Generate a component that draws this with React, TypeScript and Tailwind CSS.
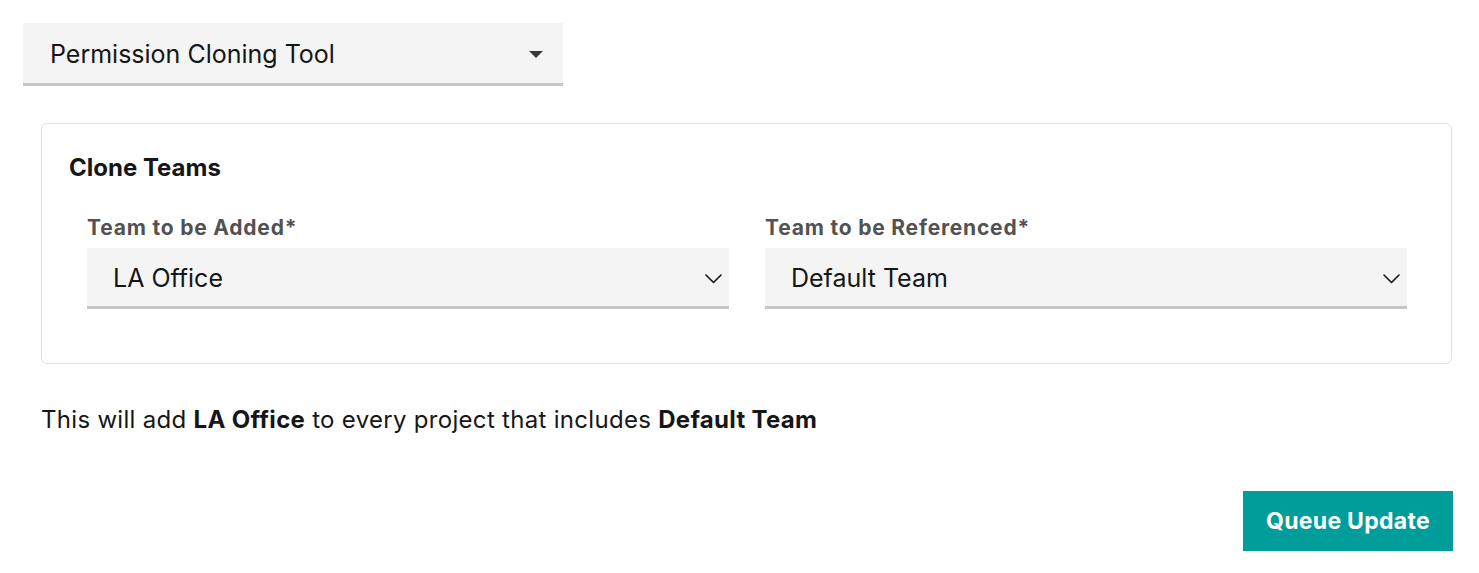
import React from 'react'

const font = { fontFamily: 'Inter, "Liberation Sans", Arial, sans-serif' }

function Chevron() {
  return (
    <svg width="17" height="10" viewBox="0 0 17 10" fill="none" aria-hidden="true">
      <polyline points="1,1 8.5,8.5 16,1" stroke="#161616" strokeWidth="1.6" strokeLinecap="round" strokeLinejoin="round" />
    </svg>
  )
}

function Caret() {
  return (
    <svg width="14" height="7" viewBox="0 0 14 7" aria-hidden="true">
      <polygon points="0,0 14,0 7,7" fill="#393939" />
    </svg>
  )
}

function TeamSelect({ label, value }: { label: string; value: string }) {
  return (
    <div className="flex flex-col">
      <label className="text-[21px] leading-[26px] font-bold tracking-[0.8px] text-[#525252]">{label}</label>
      <div className="mt-[7px] h-[61px] flex items-center justify-between bg-[#f4f4f4] border-b-[3px] border-[#c6c6c6] pl-[26px] pr-[7px] pt-[3px]">
        <span className="text-[25px] leading-[29px] text-[#161616]">{value}</span>
        <Chevron />
      </div>
    </div>
  )
}

export default function App() {
  const added = 'LA Office'
  const referenced = 'Default Team'

  return (
    <div className="min-h-screen bg-white p-[23px] text-[#161616]" style={font}>
      <div className="w-[540px] h-[63px] flex items-center justify-between bg-[#f4f4f4] border-b-[3px] border-[#c6c6c6] pl-[27px] pr-[20px] pt-[3px]">
        <span className="text-[25px] leading-[29px]">Permission Cloning Tool</span>
        <Caret />
      </div>

      <div className="ml-[18px] mt-[37px] w-[1411px] rounded-[6px] border border-[#e0e0e0] pt-[30px] pb-[54px] pl-[27px] pr-[27px]">
        <h2 className="text-[24px] leading-[28px] font-bold">Clone Teams</h2>
        <div className="mt-[33px] pl-[18px] pr-[17px] grid grid-cols-2 gap-[36px]">
          <TeamSelect label="Team to be Added*" value={added} />
          <TeamSelect label="Team to be Referenced*" value={referenced} />
        </div>
      </div>

      <p className="ml-[18px] mt-[41px] text-[24px] leading-[29px] tracking-[0.3px]">
        This will add <strong className="font-bold">{added}</strong> to every project that includes{' '}
        <strong className="font-bold">{referenced}</strong>
      </p>

      <div className="w-[1430px] mt-[57px] flex justify-end">
        <button
          type="button"
          className="w-[210px] h-[60px] flex items-center justify-center bg-[#009d9a] text-white text-[23px] font-bold tracking-[0.3px]"
        >
          Queue Update
        </button>
      </div>
    </div>
  )
}
